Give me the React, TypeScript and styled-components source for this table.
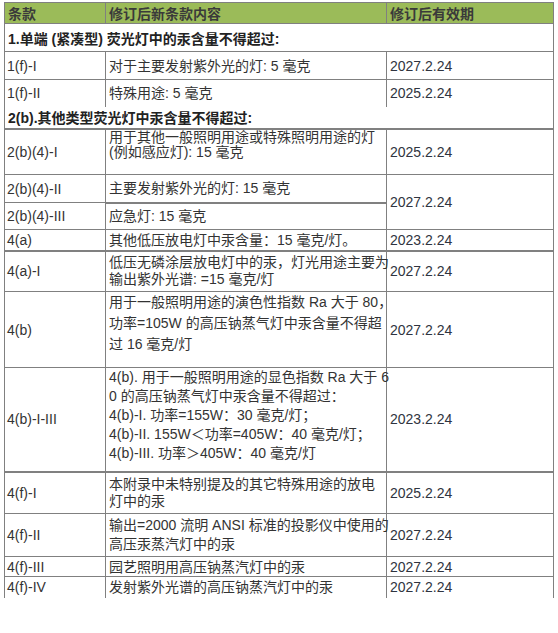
import React from "react";
import styled, { createGlobalStyle } from "styled-components";

const GlobalStyle = createGlobalStyle`
  body {
    margin: 0;
    background: #fff;
    font-family: "Liberation Sans", "Noto Sans CJK SC", sans-serif;
  }
`;

const Page = styled.div`
  height: 633px;
  box-sizing: border-box;
  padding: 2px 0 0 4px;
`;

const Table = styled.table`
  border-collapse: collapse;
  table-layout: fixed;
  width: 549px;
  font-size: 14px;
  color: #333;
`;

const Col = styled.col<{ $w: number }>`
  width: ${(p) => p.$w}px;
`;

const HeadRow = styled.tr`
  height: 21px;
`;

const Th = styled.th`
  background: #9bbb59;
  border: 1px solid #808080;
  padding: 0 3px;
  text-align: left;
  font-weight: bold;
  color: #3a3a3a;
  white-space: nowrap;
`;

const Row = styled.tr<{ $h: number }>`
  height: ${(p) => p.$h}px;
`;

const SectionCell = styled.td<{ $noTop?: boolean; $thick?: boolean }>`
  border: 1px solid #808080;
  border-top-style: ${(p) => (p.$noTop ? "hidden" : "solid")};
  border-bottom-width: ${(p) => (p.$thick ? 2 : 1)}px;
  padding: 0 3px;
  font-weight: bold;
  color: #222;
  white-space: nowrap;
`;

const Cell = styled.td<{ $thick?: boolean; $last?: boolean; $lh?: number; $pb?: number }>`
  border: 1px solid #808080;
  border-bottom-width: ${(p) => (p.$thick ? 2 : 1)}px;
  border-bottom-style: ${(p) => (p.$last ? "hidden" : "solid")};
  padding: 0 3px ${(p) => p.$pb ?? 0}px;
  vertical-align: middle;
  white-space: nowrap;
  line-height: ${(p) => p.$lh ?? 16}px;
`;

const Label = styled(Cell)`
  padding-left: 2px;
`;

const DateCell = styled(Cell)`
  color: #2f3440;
`;

type Section = { kind: "section"; text: string; noTop?: boolean; thick?: boolean; h: number };
type Item = {
  kind: "row";
  id: string;
  lines: string[];
  date?: string;
  span?: number;
  h: number;
  lh?: number;
  pb?: number;
  thick?: boolean;
  textThick?: boolean;
  last?: boolean;
};

const rows: (Section | Item)[] = [
  { kind: "section", text: "1.单端 (紧凑型) 荧光灯中的汞含量不得超过:", h: 28 },
  { kind: "row", id: "1(f)-I", lines: ["对于主要发射紫外光的灯: 5 毫克"], date: "2027.2.24", h: 28 },
  { kind: "row", id: "1(f)-II", lines: ["特殊用途: 5 毫克"], date: "2025.2.24", h: 27 },
  { kind: "section", text: "2(b).其他类型荧光灯中汞含量不得超过:", noTop: true, thick: true, h: 22 },
  {
    kind: "row",
    id: "2(b)(4)-I",
    lines: ["用于其他一般照明用途或特殊照明用途的灯", "(例如感应灯): 15 毫克"],
    date: "2025.2.24",
    h: 46,
    lh: 15,
    pb: 13,
  },
  { kind: "row", id: "2(b)(4)-II", lines: ["主要发射紫外光的灯: 15 毫克"], date: "2027.2.24", span: 2, h: 28, textThick: true },
  { kind: "row", id: "2(b)(4)-III", lines: ["应急灯: 15 毫克"], h: 27 },
  { kind: "row", id: "4(a)", lines: ["其他低压放电灯中汞含量：15 毫克/灯。"], date: "2023.2.24", h: 21, thick: true },
  {
    kind: "row",
    id: "4(a)-I",
    lines: ["低压无磷涂层放电灯中的汞，灯光用途主要为", "输出紫外光谱: =15 毫克/灯"],
    date: "2027.2.24",
    h: 41,
    lh: 17,
  },
  {
    kind: "row",
    id: "4(b)",
    lines: ["用于一般照明用途的演色性指数 Ra 大于 80，", "功率=105W 的高压钠蒸气灯中汞含量不得超", "过 16 毫克/灯"],
    date: "2027.2.24",
    h: 76,
    lh: 21,
    pb: 12,
  },
  {
    kind: "row",
    id: "4(b)-I-III",
    lines: [
      "4(b). 用于一般照明用途的显色指数 Ra 大于 6",
      "0 的高压钠蒸气灯中汞含量不得超过：",
      "4(b)-I. 功率=155W：30 毫克/灯；",
      "4(b)-II. 155W＜功率=405W：40 毫克/灯；",
      "4(b)-III. 功率＞405W：40 毫克/灯",
    ],
    date: "2023.2.24",
    h: 104,
    lh: 19,
    pb: 7,
    thick: true,
  },
  {
    kind: "row",
    id: "4(f)-I",
    lines: ["本附录中未特别提及的其它特殊用途的放电", "灯中的汞"],
    date: "2025.2.24",
    h: 42,
    lh: 17,
  },
  {
    kind: "row",
    id: "4(f)-II",
    lines: ["输出=2000 流明 ANSI 标准的投影仪中使用的", "高压汞蒸汽灯中的汞"],
    date: "2027.2.24",
    h: 43,
    lh: 19,
  },
  { kind: "row", id: "4(f)-III", lines: ["园艺照明用高压钠蒸汽灯中的汞"], date: "2027.2.24", h: 20 },
  { kind: "row", id: "4(f)-IV", lines: ["发射紫外光谱的高压钠蒸汽灯中的汞"], date: "2027.2.24", h: 21, last: true },
];

export default function App() {
  return (
    <>
      <GlobalStyle />
      <Page>
        <Table>
          <colgroup>
            <Col $w={101} />
            <Col $w={281} />
            <Col $w={167} />
          </colgroup>
          <thead>
            <HeadRow>
              <Th>条款</Th>
              <Th>修订后新条款内容</Th>
              <Th>修订后有效期</Th>
            </HeadRow>
          </thead>
          <tbody>
            {rows.map((r, i) =>
              r.kind === "section" ? (
                <Row key={i} $h={r.h}>
                  <SectionCell colSpan={3} $noTop={r.noTop} $thick={r.thick}>
                    {r.text}
                  </SectionCell>
                </Row>
              ) : (
                <Row key={i} $h={r.h}>
                  <Label $thick={r.thick} $last={r.last}>
                    {r.id}
                  </Label>
                  <Cell $thick={r.thick || r.textThick} $last={r.last} $lh={r.lh} $pb={r.pb}>
                    {r.lines.map((l, j) => (
                      <div key={j}>{l}</div>
                    ))}
                  </Cell>
                  {r.date && (
                    <DateCell rowSpan={r.span} $thick={r.thick} $last={r.last}>
                      {r.date}
                    </DateCell>
                  )}
                </Row>
              )
            )}
          </tbody>
        </Table>
      </Page>
    </>
  );
}
